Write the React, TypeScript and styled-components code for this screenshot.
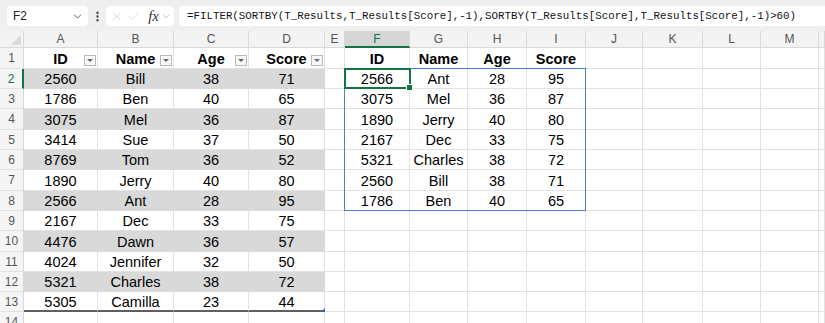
import React from 'react'
import styled, { createGlobalStyle } from 'styled-components'
import { ChevronDown, EllipsisVertical, X, Check } from 'lucide-react'

const GlobalStyle = createGlobalStyle`
  html, body {
    margin: 0;
    padding: 0;
    background: #ffffff;
    overflow: hidden;
  }
  * {
    box-sizing: border-box;
  }
`

const COLUMNS = ['A', 'B', 'C', 'D', 'E', 'F', 'G', 'H', 'I', 'J', 'K', 'L', 'M', '']
const COL_WIDTHS = '24px 74px 76px 75px 76px 20px 65px 58px 59px 59px 57px 60px 58px 58px 1fr'
const ROW_HEIGHTS = [17, 21, 20, 20, 21, 20, 20, 21, 20, 20, 21, 20, 20, 20, 20]
const FORMULA = '=FILTER(SORTBY(T_Results,T_Results[Score],-1),SORTBY(T_Results[Score],T_Results[Score],-1)>60)'

const HEADERS = ['ID', 'Name', 'Age', 'Score']

const results = [
  ['2560', 'Bill', '38', '71'],
  ['1786', 'Ben', '40', '65'],
  ['3075', 'Mel', '36', '87'],
  ['3414', 'Sue', '37', '50'],
  ['8769', 'Tom', '36', '52'],
  ['1890', 'Jerry', '40', '80'],
  ['2566', 'Ant', '28', '95'],
  ['2167', 'Dec', '33', '75'],
  ['4476', 'Dawn', '36', '57'],
  ['4024', 'Jennifer', '32', '50'],
  ['5321', 'Charles', '38', '72'],
  ['5305', 'Camilla', '23', '44'],
]

const spilled = [
  ['2566', 'Ant', '28', '95'],
  ['3075', 'Mel', '36', '87'],
  ['1890', 'Jerry', '40', '80'],
  ['2167', 'Dec', '33', '75'],
  ['5321', 'Charles', '38', '72'],
  ['2560', 'Bill', '38', '71'],
  ['1786', 'Ben', '40', '65'],
]

const Page = styled.div`
  width: 825px;
  height: 323px;
  display: flex;
  flex-direction: column;
  overflow: hidden;
  font-family: 'Liberation Sans', Arial, sans-serif;
`

const FormulaBar = styled.div`
  flex: 0 0 31px;
  display: flex;
  align-items: flex-start;
  padding: 6px 0 0 7px;
  background: #efefef;
`

const NameBox = styled.div`
  width: 81px;
  height: 20px;
  display: flex;
  align-items: center;
  justify-content: space-between;
  padding: 0 4px 0 6px;
  background: #ffffff;
  border-radius: 4px;
  font-size: 12px;
  color: #222;
`

const Grip = styled.div`
  width: 18px;
  height: 20px;
  display: flex;
  align-items: center;
  justify-content: center;
  color: #444;
`

const EditBox = styled.div`
  width: 68px;
  height: 20px;
  display: flex;
  align-items: center;
  gap: 3px;
  padding: 0 3px 0 4px;
  background: #ffffff;
  border-radius: 4px;
  color: #c4c4c4;
`

const Fx = styled.span`
  font-family: 'Liberation Serif', 'Times New Roman', serif;
  font-style: italic;
  font-size: 15px;
  color: #333;
  margin-left: 5px;
  margin-right: -1px;
`

const FormulaInput = styled.div`
  flex: 1;
  height: 20px;
  margin-left: 5px;
  display: flex;
  align-items: center;
  padding-left: 8px;
  background: #ffffff;
  border-radius: 4px 0 0 4px;
  font-family: 'Liberation Mono', 'Courier New', monospace;
  font-size: 10.8px;
  color: #111;
  white-space: nowrap;
`

const Sheet = styled.div`
  flex: 1;
  display: grid;
  grid-template-columns: ${COL_WIDTHS};
  grid-template-rows: ${ROW_HEIGHTS.map((h) => `${h}px`).join(' ')};
  overflow: hidden;
  background: #ffffff;
`

const Placed = styled.div<{ $col: number; $row: number }>`
  grid-column: ${(p) => p.$col + 1};
  grid-row: ${(p) => p.$row + 1};
`

const Corner = styled(Placed)`
  position: relative;
  background: #f3f3f3;
  border-right: 1px solid #d8d8d8;
  border-bottom: 1px solid #d8d8d8;

  &::after {
    content: '';
    position: absolute;
    right: 2px;
    bottom: 2px;
    width: 0;
    height: 0;
    border-left: 10px solid transparent;
    border-bottom: 10px solid #d9d9d9;
  }
`

const ColHeader = styled(Placed)<{ $active?: boolean }>`
  display: flex;
  align-items: center;
  justify-content: center;
  font-size: 12px;
  color: ${(p) => (p.$active ? '#137343' : '#555')};
  background: ${(p) => (p.$active ? '#d6d6d6' : '#f3f3f3')};
  border-right: 1px solid #d8d8d8;
  border-bottom: ${(p) => (p.$active ? '2px solid #137343' : '1px solid #d8d8d8')};
`

const RowHeader = styled(Placed)<{ $active?: boolean }>`
  display: flex;
  align-items: center;
  justify-content: center;
  font-size: 12px;
  color: ${(p) => (p.$active ? '#137343' : '#555')};
  background: #f5f5f5;
  border-right: ${(p) => (p.$active ? '2px solid #137343' : '1px solid #d8d8d8')};
  border-bottom: 1px solid #e2e2e2;
`

const Cell = styled(Placed)<{ $band?: boolean; $bold?: boolean; $last?: boolean }>`
  position: relative;
  display: flex;
  align-items: center;
  justify-content: center;
  font-size: 14.5px;
  font-weight: ${(p) => (p.$bold ? 'bold' : 'normal')};
  color: #000;
  background: ${(p) => (p.$band ? '#d9d9d9' : '#ffffff')};
  border-right: 1px solid ${(p) => (p.$band ? '#d9d9d9' : '#e2e2e2')};
  border-bottom: ${(p) => (p.$last ? '2px solid #5f5f5f' : `1px solid ${p.$band ? '#d9d9d9' : '#e2e2e2'}`)};
  white-space: nowrap;
  padding-top: 1px;
`

const FilterButton = styled.span`
  position: absolute;
  right: 1px;
  top: 7px;
  width: 12px;
  height: 11px;
  border: 1px solid #b9b9b9;
  background: #f7f7f7;
  display: flex;
  align-items: center;
  justify-content: center;

  &::after {
    content: '';
    width: 0;
    height: 0;
    border-left: 3px solid transparent;
    border-right: 3px solid transparent;
    border-top: 3px solid #666;
  }
`

const ResizeHandle = styled.span`
  position: absolute;
  right: -1px;
  bottom: -2px;
  width: 0;
  height: 0;
  border-left: 4px solid transparent;
  border-bottom: 4px solid #2f5fb3;
`

const SpillOutline = styled.div`
  grid-column: 7 / 11;
  grid-row: 3 / 10;
  margin: -1px 0 0 -1px;
  border: 1px solid #4f7fcc;
  pointer-events: none;
  z-index: 2;
`

const ActiveCell = styled.div`
  grid-column: 7;
  grid-row: 3;
  position: relative;
  margin: -1px -1px 0 -1px;
  border: 2px solid #137343;
  pointer-events: none;
  z-index: 3;

  &::after {
    content: '';
    position: absolute;
    right: -4px;
    bottom: -4px;
    width: 5px;
    height: 5px;
    background: #137343;
    border: 1px solid #ffffff;
  }
`

const cellValue = (row: number, col: number): { text: string; band: boolean; bold: boolean; last: boolean } => {
  const empty = { text: '', band: false, bold: false, last: false }
  if (col >= 1 && col <= 4) {
    if (row === 1) return { text: HEADERS[col - 1], band: false, bold: true, last: false }
    if (row >= 2 && row <= 13) {
      return {
        text: results[row - 2][col - 1],
        band: row % 2 === 0,
        bold: false,
        last: row === 13,
      }
    }
    return empty
  }
  if (col >= 6 && col <= 9) {
    if (row === 1) return { text: HEADERS[col - 6], band: false, bold: true, last: false }
    if (row >= 2 && row <= 8) return { ...empty, text: spilled[row - 2][col - 6] }
  }
  return empty
}

const App: React.FC = () => {
  const rows = ROW_HEIGHTS.length - 1

  return (
    <Page>
      <GlobalStyle />
      <FormulaBar>
        <NameBox>
          <span>F2</span>
          <ChevronDown size={13} strokeWidth={1.6} color='#444' />
        </NameBox>
        <Grip>
          <EllipsisVertical size={13} strokeWidth={2.4} />
        </Grip>
        <EditBox>
          <X size={15} strokeWidth={1.2} />
          <Check size={15} strokeWidth={1.2} />
          <Fx>fx</Fx>
          <ChevronDown size={11} strokeWidth={1.4} color='#888' />
        </EditBox>
        <FormulaInput>{FORMULA}</FormulaInput>
      </FormulaBar>

      <Sheet>
        <Corner $col={0} $row={0} />
        {COLUMNS.map((c, i) => (
          <ColHeader key={`h${i}`} $col={i + 1} $row={0} $active={c === 'F'}>
            {c}
          </ColHeader>
        ))}

        {Array.from({ length: rows }, (_, r) => r + 1).map((row) => (
          <React.Fragment key={`r${row}`}>
            <RowHeader $col={0} $row={row} $active={row === 2}>
              {row}
            </RowHeader>
            {COLUMNS.map((_, ci) => {
              const col = ci + 1
              const v = cellValue(row, col)
              return (
                <Cell key={`c${row}-${col}`} $col={col} $row={row} $band={v.band} $bold={v.bold} $last={v.last}>
                  {v.text}
                  {row === 1 && col <= 4 && <FilterButton />}
                  {row === 13 && col === 4 && <ResizeHandle />}
                </Cell>
              )
            })}
          </React.Fragment>
        ))}

        <SpillOutline />
        <ActiveCell />
      </Sheet>
    </Page>
  )
}

export default App
